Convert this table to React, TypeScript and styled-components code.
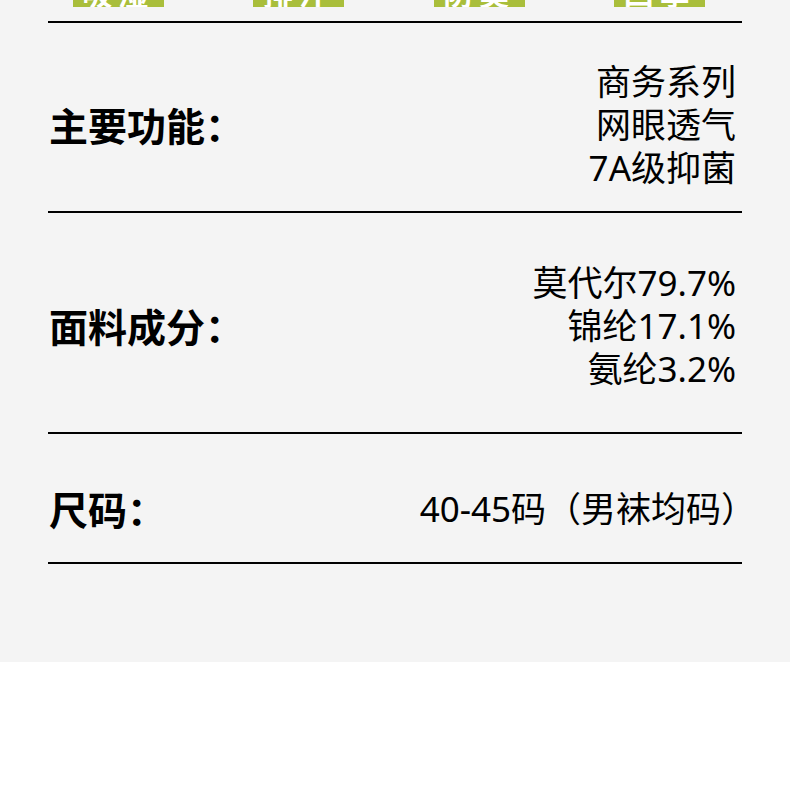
import React from "react";
import styled, { createGlobalStyle } from "styled-components";

const GlobalStyle = createGlobalStyle`
  html, body {
    margin: 0;
    padding: 0;
    background: #ffffff;
  }
  body {
    font-family: "Noto Sans CJK SC", "Noto Sans", sans-serif;
    color: #000;
  }
`;

const Page = styled.div`
  background: #f4f4f4;
  padding-bottom: 98px;
`;

const TagStrip = styled.div`
  display: grid;
  grid-template-columns: repeat(4, 1fr);
  justify-items: center;
  margin: 0 40px 0 28px;
  height: 7px;
`;

const Tag = styled.div`
  width: 91px;
  height: 7px;
  background: #a9be3b;
  color: #fff;
  overflow: hidden;
  display: flex;
  align-items: flex-end;
  justify-content: center;
  font-size: 30px;
  font-weight: 700;
  line-height: 30px;
  letter-spacing: 6px;
`;

const Sheet = styled.div`
  margin: 14px 48px 0;
  border-top: 2px solid #000;
`;

const Row = styled.div<{ $top: number; $bottom: number }>`
  display: flex;
  justify-content: space-between;
  align-items: center;
  padding: ${p => p.$top}px 0 ${p => p.$bottom}px;
  border-bottom: 2px solid #000;
`;

const Label = styled.div`
  padding-left: 1px;
  font-size: 39px;
  font-weight: 700;
  line-height: 43px;
  white-space: nowrap;
`;

const Values = styled.div<{ $shift?: number }>`
  margin-right: ${p => p.$shift ?? 6}px;
  text-align: right;
  font-family: "Noto Sans", "Noto Sans CJK SC", sans-serif;
  font-size: 35px;
  font-weight: 400;
  line-height: 43px;
  white-space: nowrap;
`;

type Spec = {
  label: string;
  values: string[];
  top: number;
  bottom: number;
  shift?: number;
};

const tags = ["吸湿", "排汗", "防臭", "四季"];

const specs: Spec[] = [
  {
    label: "主要功能：",
    values: ["商务系列", "网眼透气", "7A级抑菌"],
    top: 37,
    bottom: 22
  },
  {
    label: "面料成分：",
    values: ["莫代尔79.7%", "锦纶17.1%", "氨纶3.2%"],
    top: 48,
    bottom: 42
  },
  {
    label: "尺码：",
    values: ["40-45码（男袜均码）"],
    top: 53,
    bottom: 32,
    shift: -14
  }
];

export default function App() {
  return (
    <>
      <GlobalStyle />
      <Page>
        <TagStrip>
          {tags.map(t => (
            <Tag key={t}>{t}</Tag>
          ))}
        </TagStrip>
        <Sheet>
          {specs.map(s => (
            <Row key={s.label} $top={s.top} $bottom={s.bottom}>
              <Label>{s.label}</Label>
              <Values $shift={s.shift}>
                {s.values.map(v => (
                  <div key={v}>{v}</div>
                ))}
              </Values>
            </Row>
          ))}
        </Sheet>
      </Page>
    </>
  );
}
